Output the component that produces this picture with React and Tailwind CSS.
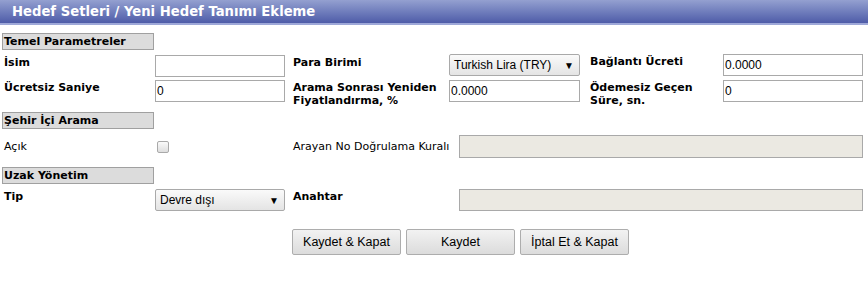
import React from 'react';

const verdana = { fontFamily: '"DejaVu Sans", Verdana, sans-serif' };

const SectionTitle = ({ children }) => (
  <div className="ml-[2px] w-[152px] h-[17px] bg-[#dcdcdc] border border-[#a0a0a0] pl-[1px] text-[11px] leading-[15px] font-bold text-black">
    {children}
  </div>
);

const TextInput = ({ value, className = '' }) => (
  <input
    type="text"
    defaultValue={value}
    className={`h-[22px] border border-[#a9a9a9] bg-white px-[1px] text-[12px] text-black outline-none font-['Liberation_Sans',Arial,sans-serif] ${className}`}
  />
);

const SelectBox = ({ value, className = '' }) => (
  <div className={`h-[22px] flex items-center justify-between border border-[#a9a9a9] rounded-[2px] bg-gradient-to-b from-[#fafafa] to-[#e4e4e4] pl-[4px] pr-[5px] text-[12px] text-black font-['Liberation_Sans',Arial,sans-serif] ${className}`}>
    <span>{value}</span>
    <span className="text-[10px]">▼</span>
  </div>
);

const Label = ({ children, className = '' }) => (
  <div className={`text-[11px] leading-[13px] font-bold text-black ${className}`}>{children}</div>
);

export default function App() {
  return (
    <div className="w-[868px] h-[298px] bg-white" style={verdana}>
      <div className="h-[25px] border-b-2 border-[#9ea8d8] bg-gradient-to-b from-[#94a0d0] to-[#4f5ca8] pl-[12px] text-[13.2px] leading-[24px] font-bold text-white">
        Hedef Setleri / Yeni Hedef Tanımı Ekleme
      </div>

      <div className="mt-[8px]">
        <SectionTitle>Temel Parametreler</SectionTitle>
      </div>

      <div className="mt-[5px] grid grid-cols-[155px_130px_164px_131px_143px_140px] gap-y-[3px] items-start">
        <Label className="pl-[4px] pt-[1px]">İsim</Label>
        <TextInput value="" className="w-[130px]" />
        <Label className="pl-[8px] pt-[1px]">Para Birimi</Label>
        <SelectBox value="Turkish Lira (TRY)" className="w-[131px] -mt-[1px]" />
        <Label className="pl-[10px] pt-[0px]">Bağlantı Ücreti</Label>
        <TextInput value="0.0000" className="w-[140px] -mt-[1px]" />

        <Label className="pl-[4px] pt-[1px]">Ücretsiz Saniye</Label>
        <TextInput value="0" className="w-[130px]" />
        <Label className="pl-[8px] pt-[1px]">Arama Sonrası Yeniden Fiyatlandırma, %</Label>
        <TextInput value="0.0000" className="w-[131px]" />
        <Label className="pl-[10px] pt-[1px]">Ödemesiz Geçen Süre, sn.</Label>
        <TextInput value="0" className="w-[140px]" />
      </div>

      <div className="mt-[5px]">
        <SectionTitle>Şehir İçi Arama</SectionTitle>
      </div>

      <div className="mt-[6px] flex items-center h-[23px]">
        <div className="w-[157px] pl-[4px] text-[11px] leading-[13px] text-black">Açık</div>
        <div className="w-[12px] h-[12px] rounded-[2px] border border-[#a9a9a9] bg-gradient-to-b from-[#fafafa] to-[#dedede]" />
        <div className="ml-[124px] w-[166px] text-[11px] leading-[13px] text-black">Arayan No Doğrulama Kuralı</div>
        <div className="w-[404px] h-[23px] border border-[#a9a9a9] bg-[#ebe9e2]" />
      </div>

      <div className="mt-[9px]">
        <SectionTitle>Uzak Yönetim</SectionTitle>
      </div>

      <div className="mt-[5px] flex items-start">
        <Label className="w-[155px] pl-[4px] pt-[1px]">Tip</Label>
        <SelectBox value="Devre dışı" className="w-[130px]" />
        <Label className="w-[174px] pl-[8px] pt-[1px]">Anahtar</Label>
        <div className="w-[404px] h-[22px] border border-[#a9a9a9] bg-[#ebe9e2]" />
      </div>

      <div className="mt-[18px] flex gap-[5px] pl-[292px] font-['Liberation_Sans',Arial,sans-serif]">
        {['Kaydet & Kapat', 'Kaydet', 'İptal Et & Kapat'].map((t) => (
          <button
            key={t}
            className="w-[109px] h-[26px] border border-[#adadad] rounded-[2px] bg-gradient-to-b from-[#f2f2f2] to-[#dcdcdc] text-[12.5px] text-black"
          >
            {t}
          </button>
        ))}
      </div>
    </div>
  );
}
